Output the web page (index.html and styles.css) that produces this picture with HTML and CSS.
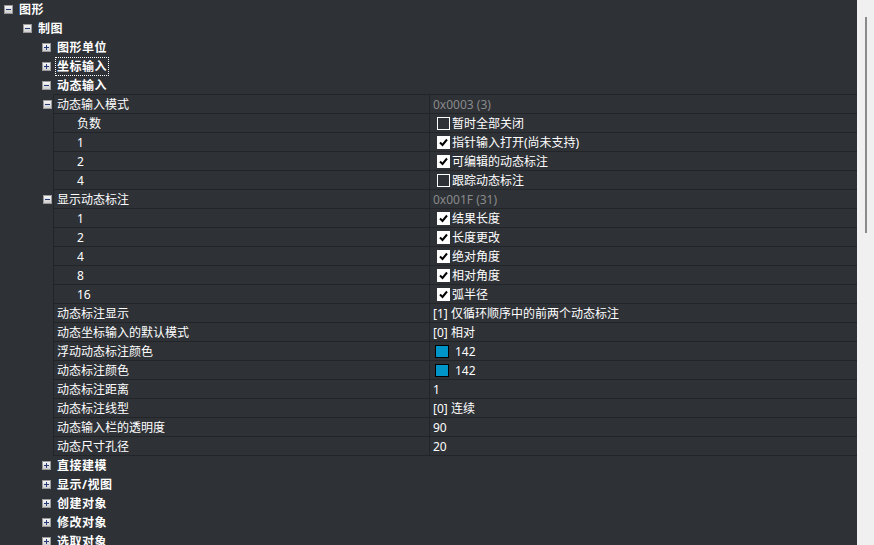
FILE: index.html
```html
<!doctype html>
<html lang="zh-CN">
<head>
  <meta charset="utf-8">
  <title>选项 - 图形</title>
  <link rel="stylesheet" href="styles.css">
</head>
<body>
  <div class="app">
    <div class="panel">
      <div class="node l0"><span class="tog minus"></span><span class="title">图形</span></div>
      <div class="node l1"><span class="tog minus"></span><span class="title">制图</span></div>
      <div class="node l2"><span class="tog plus"></span><span class="title">图形单位</span></div>
      <div class="node l2"><span class="tog plus"></span><span class="title focus">坐标输入</span></div>
      <div class="node l2"><span class="tog minus"></span><span class="title">动态输入</span></div>

      <div class="props">
        <div class="prow"><span class="gutter"><span class="tog minus"></span></span><div class="cells"><div class="name">动态输入模式</div><div class="val dim">0x0003 (3)</div></div></div>
        <div class="prow"><span class="gutter"></span><div class="cells"><div class="name sub">负数</div><div class="val"><span class="cb"></span>暂时全部关闭</div></div></div>
        <div class="prow"><span class="gutter"></span><div class="cells"><div class="name sub">1</div><div class="val"><span class="cb on"><svg viewBox="0 0 11 11"><polyline points="2,5.5 4.5,8 9,2.5"/></svg></span>指针输入打开(尚未支持)</div></div></div>
        <div class="prow"><span class="gutter"></span><div class="cells"><div class="name sub">2</div><div class="val"><span class="cb on"><svg viewBox="0 0 11 11"><polyline points="2,5.5 4.5,8 9,2.5"/></svg></span>可编辑的动态标注</div></div></div>
        <div class="prow"><span class="gutter"></span><div class="cells"><div class="name sub">4</div><div class="val"><span class="cb"></span>跟踪动态标注</div></div></div>

        <div class="prow"><span class="gutter"><span class="tog minus"></span></span><div class="cells"><div class="name">显示动态标注</div><div class="val dim">0x001F (31)</div></div></div>
        <div class="prow"><span class="gutter"></span><div class="cells"><div class="name sub">1</div><div class="val"><span class="cb on"><svg viewBox="0 0 11 11"><polyline points="2,5.5 4.5,8 9,2.5"/></svg></span>结果长度</div></div></div>
        <div class="prow"><span class="gutter"></span><div class="cells"><div class="name sub">2</div><div class="val"><span class="cb on"><svg viewBox="0 0 11 11"><polyline points="2,5.5 4.5,8 9,2.5"/></svg></span>长度更改</div></div></div>
        <div class="prow"><span class="gutter"></span><div class="cells"><div class="name sub">4</div><div class="val"><span class="cb on"><svg viewBox="0 0 11 11"><polyline points="2,5.5 4.5,8 9,2.5"/></svg></span>绝对角度</div></div></div>
        <div class="prow"><span class="gutter"></span><div class="cells"><div class="name sub">8</div><div class="val"><span class="cb on"><svg viewBox="0 0 11 11"><polyline points="2,5.5 4.5,8 9,2.5"/></svg></span>相对角度</div></div></div>
        <div class="prow"><span class="gutter"></span><div class="cells"><div class="name sub">16</div><div class="val"><span class="cb on"><svg viewBox="0 0 11 11"><polyline points="2,5.5 4.5,8 9,2.5"/></svg></span>弧半径</div></div></div>

        <div class="prow"><span class="gutter"></span><div class="cells"><div class="name">动态标注显示</div><div class="val text">[1] 仅循环顺序中的前两个动态标注</div></div></div>
        <div class="prow"><span class="gutter"></span><div class="cells"><div class="name">动态坐标输入的默认模式</div><div class="val text">[0] 相对</div></div></div>
        <div class="prow"><span class="gutter"></span><div class="cells"><div class="name">浮动动态标注颜色</div><div class="val"><span class="swatch"></span>142</div></div></div>
        <div class="prow"><span class="gutter"></span><div class="cells"><div class="name">动态标注颜色</div><div class="val"><span class="swatch"></span>142</div></div></div>
        <div class="prow"><span class="gutter"></span><div class="cells"><div class="name">动态标注距离</div><div class="val text">1</div></div></div>
        <div class="prow"><span class="gutter"></span><div class="cells"><div class="name">动态标注线型</div><div class="val text">[0] 连续</div></div></div>
        <div class="prow"><span class="gutter"></span><div class="cells"><div class="name">动态输入栏的透明度</div><div class="val text">90</div></div></div>
        <div class="prow"><span class="gutter"></span><div class="cells"><div class="name">动态尺寸孔径</div><div class="val text">20</div></div></div>
      </div>

      <div class="node l2"><span class="tog plus"></span><span class="title">直接建模</span></div>
      <div class="node l2"><span class="tog plus"></span><span class="title">显示/视图</span></div>
      <div class="node l2"><span class="tog plus"></span><span class="title">创建对象</span></div>
      <div class="node l2"><span class="tog plus"></span><span class="title">修改对象</span></div>
      <div class="node l2"><span class="tog plus"></span><span class="title">选取对象</span></div>
    </div>
    <div class="vscroll"><div class="thumb"></div></div>
  </div>
</body>
</html>
```

FILE: styles.css
```css
html, body {
  margin: 0;
  height: 100%;
  overflow: hidden;
}

body {
  background: #2e3136;
  color: #ffffff;
  font-family: "Noto Sans", "Noto Sans CJK SC", sans-serif;
  font-size: 12px;
}

.app {
  display: flex;
  height: 545px;
}

.panel {
  flex: 1;
  overflow: hidden;
}

/* tree nodes */
.node {
  display: flex;
  align-items: center;
  height: 19px;
  line-height: 17px;
}

.l0 { padding-left: 4px; }
.l1 { padding-left: 23px; }
.l2 { padding-left: 42px; }

.title {
  font-weight: bold;
  margin-left: 6px;
  letter-spacing: 0.5px;
}

.focus {
  border: 1px dotted #ffffff;
  padding: 0 1px;
  margin-left: 4px;
}

.tog {
  position: relative;
  flex: none;
  width: 9px;
  height: 9px;
  box-sizing: border-box;
  border: 1px solid #9a9a9a;
  background: linear-gradient(#f6f6f6, #cfcfcf);
}

.tog::before {
  content: "";
  position: absolute;
  left: 1px;
  top: 3px;
  width: 5px;
  height: 1px;
  background: #253a78;
}

.tog.plus::after {
  content: "";
  position: absolute;
  left: 3px;
  top: 1px;
  width: 1px;
  height: 5px;
  background: #253a78;
}

/* property grid */
.props {
  margin-left: 41px;
  margin-top: -1px;
}

.prow {
  display: flex;
}

.gutter {
  width: 12px;
  flex: none;
  display: flex;
  align-items: center;
  padding-left: 2px;
  box-sizing: border-box;
}

.cells {
  flex: 1;
  display: grid;
  grid-template-columns: 376px 1fr;
  height: 19px;
  box-sizing: border-box;
  border-left: 1px solid #222428;
  border-bottom: 1px solid #222428;
}

.prow:first-child .cells {
  height: 20px;
  border-top: 1px solid #222428;
}

.name {
  border-right: 1px solid #222428;
  padding-left: 3px;
  line-height: 19px;
  white-space: nowrap;
}

.name.sub {
  padding-left: 23px;
}

.val {
  display: flex;
  align-items: center;
  padding-left: 7px;
  line-height: 18px;
  white-space: nowrap;
}

.val.text,
.val.dim {
  padding-left: 3px;
}

.val.dim {
  color: #8a8a8a;
}

.cb {
  width: 13px;
  height: 13px;
  box-sizing: border-box;
  border: 1px solid #ffffff;
  margin-right: 2px;
  flex: none;
  display: flex;
}

.cb.on {
  background: #ffffff;
}

.cb svg {
  width: 11px;
  height: 11px;
}

.cb polyline {
  fill: none;
  stroke: #000000;
  stroke-width: 2;
}

.swatch {
  width: 14px;
  height: 13px;
  box-sizing: border-box;
  border: 1px solid #000000;
  background: #0095c8;
  margin-left: -2px;
  margin-right: 6px;
  flex: none;
}

/* scrollbar */
.vscroll {
  width: 17px;
  flex: none;
  background: #f0f0f0;
}

.thumb {
  width: 2px;
  height: 216px;
  margin: 17px 0 0 8px;
  background: #8a8a8a;
}
```
